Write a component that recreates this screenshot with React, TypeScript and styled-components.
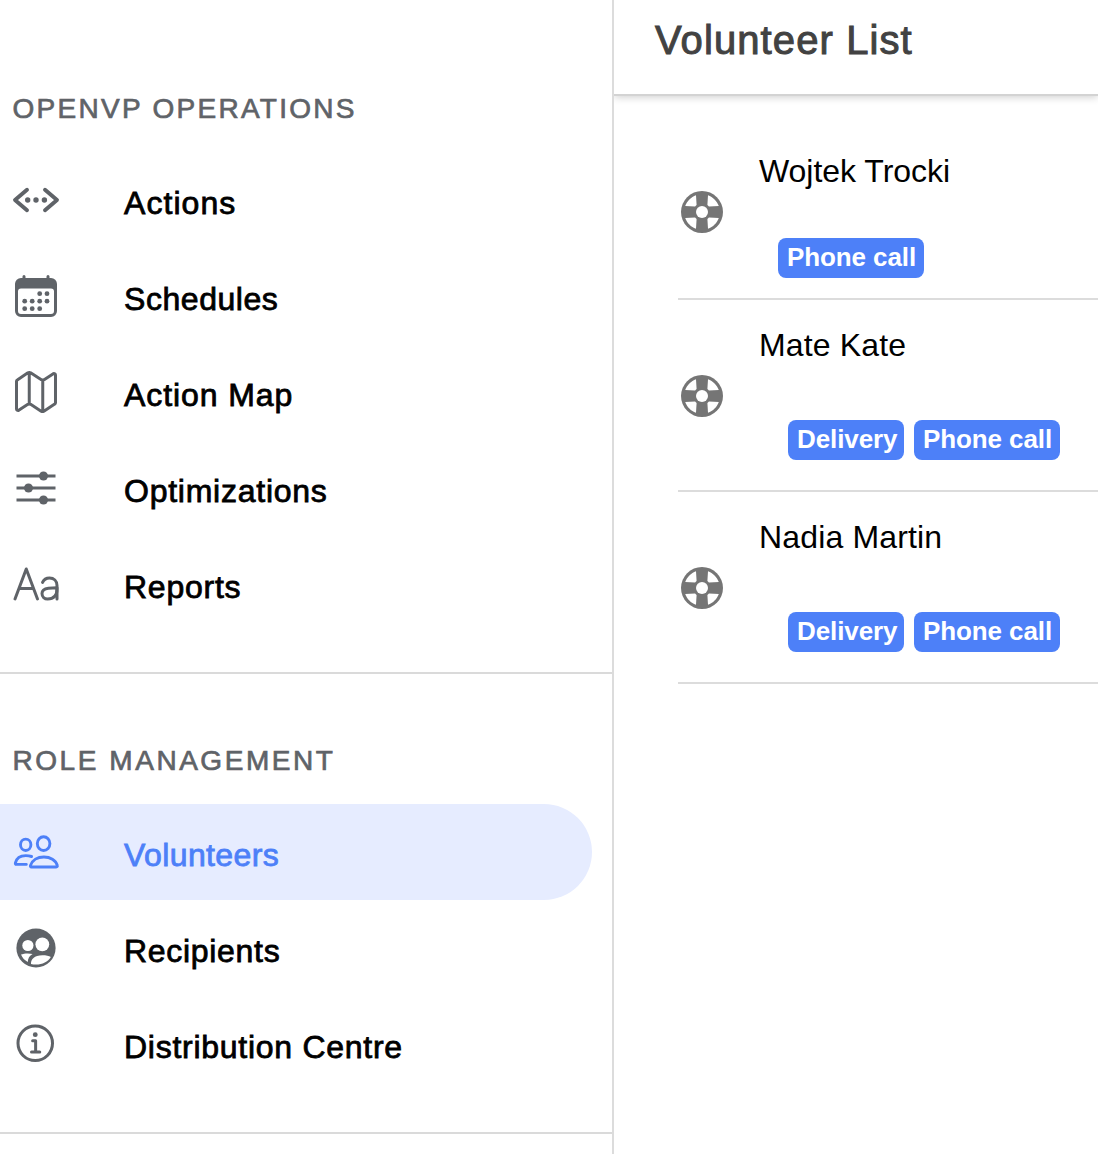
import React from "react";
import styled, { createGlobalStyle } from "styled-components";
import {
  IoInformationCircleOutline,
  IoMapOutline,
  IoTextOutline,
} from "react-icons/io5";

const GlobalStyle = createGlobalStyle`
  * { box-sizing: border-box; }
  body {
    margin: 0;
    background: #fff;
    color: #000;
    font-family: "Liberation Sans", Arial, sans-serif;
  }
`;

const Page = styled.div`
  display: flex;
  height: 1154px;
  overflow: hidden;
`;

const Sidebar = styled.nav`
  flex: 0 0 614px;
  border-right: 2px solid #dcdcdc;
`;

const Section = styled.section<{ $top: number; $bottom: number }>`
  padding: ${(p) => p.$top}px 20px ${(p) => p.$bottom}px 0;
  border-bottom: 2px solid #dadada;
`;

const SectionTitle = styled.h2<{ $tracking: number }>`
  margin: 0 0 27px;
  padding-left: 12.5px;
  font-size: 28px;
  line-height: 32px;
  font-weight: 400;
  letter-spacing: ${(p) => p.$tracking}px;
  color: #5f6368;
  -webkit-text-stroke: 0.7px currentColor;
  white-space: nowrap;
`;

const MenuItem = styled.a<{ $active?: boolean }>`
  display: flex;
  align-items: center;
  gap: 64px;
  height: 96px;
  padding-left: 12px;
  border-radius: 0 48px 48px 0;
  background: ${(p) => (p.$active ? "#e6ecff" : "transparent")};
  color: ${(p) => (p.$active ? "#4d80f8" : "#000")};

  svg {
    flex: none;
    width: 48px;
    height: 48px;
    color: ${(p) => (p.$active ? "#4d80f8" : "#5f6368")};
  }
`;

const MenuLabel = styled.span<{ $tracking: number }>`
  padding-top: 6px;
  font-size: 32px;
  line-height: 38px;
  letter-spacing: ${(p) => p.$tracking}px;
  -webkit-text-stroke: 0.8px currentColor;
  white-space: nowrap;
`;

const Main = styled.main`
  flex: 1;
  min-width: 0;
  overflow: hidden;
`;

const Header = styled.header`
  height: 94px;
  padding: 17px 0 0 41px;
  box-shadow: 0 2px 0 #d3d3d3, 0 3px 8px rgba(0, 0, 0, 0.2);
`;

const Title = styled.h1`
  margin: 0;
  font-size: 40px;
  line-height: 46px;
  font-weight: 400;
  letter-spacing: 1.1px;
  color: #424242;
  -webkit-text-stroke: 1px currentColor;
`;

const List = styled.div`
  display: flex;
  flex-direction: column;
  padding: 32px 0 0 64px;
`;

const Row = styled.article<{ $height: number }>`
  display: flex;
  gap: 33px;
  height: ${(p) => p.$height}px;
  border-bottom: 2px solid #dcdcdc;
`;

const RowIcon = styled.div<{ $top: number }>`
  flex: none;
  padding-top: ${(p) => p.$top}px;
  color: #757575;

  svg {
    display: block;
    width: 48px;
    height: 48px;
  }
`;

const RowBody = styled.div`
  padding-top: 26px;
`;

const Name = styled.h3<{ $tracking: number }>`
  margin: 0;
  font-size: 32px;
  line-height: 38px;
  font-weight: 400;
  letter-spacing: ${(p) => p.$tracking}px;
`;

const Badges = styled.div<{ $indent: number; $top: number }>`
  display: flex;
  gap: 10px;
  padding: ${(p) => p.$top}px 0 0 ${(p) => p.$indent}px;
`;

const Badge = styled.span<{ $width: number }>`
  width: ${(p) => p.$width}px;
  height: 40px;
  padding-left: 9px;
  border-radius: 8px;
  background: #4d80f8;
  color: #fff;
  font-size: 26px;
  line-height: 38px;
  font-weight: 700;
  letter-spacing: -0.1px;
  white-space: nowrap;
`;

const CodeIcon = () => (
  <svg viewBox="0 0 48 48" fill="currentColor">
    <path
      d="M15 13.7L3 24L15 34.3M33 13.7L45 24L33 34.3"
      fill="none"
      stroke="currentColor"
      strokeWidth="3.9"
      strokeLinecap="round"
      strokeLinejoin="round"
    />
    <circle cx="15.7" cy="24" r="2.7" />
    <circle cx="24" cy="24" r="2.7" />
    <circle cx="32.4" cy="24" r="2.7" />
  </svg>
);

const CALENDAR_DOTS = [
  [27.7, 21.7], [35, 21.7],
  [12.7, 29.2], [20.2, 29.2], [27.7, 29.2], [35, 29.2],
  [12.7, 36.7], [20.2, 36.7], [27.7, 36.7],
];

const CalendarIcon = () => (
  <svg viewBox="0 0 48 48" fill="currentColor">
    <path
      fillRule="evenodd"
      d="M10.5 6V4.5a1.5 1.5 0 0 1 3 0V6H34.5V4.5a1.5 1.5 0 0 1 3 0V6H39a6 6 0 0 1 6 6V39a6 6 0 0 1-6 6H9a6 6 0 0 1-6-6V12a6 6 0 0 1 6-6ZM9 16.5a3 3 0 0 0-3 3V39a3 3 0 0 0 3 3H39a3 3 0 0 0 3-3V19.5a3 3 0 0 0-3-3Z"
    />
    {CALENDAR_DOTS.map(([x, y]) => (
      <circle key={`${x}-${y}`} cx={x} cy={y} r="2.4" />
    ))}
  </svg>
);

const OptionsIcon = () => (
  <svg viewBox="0 0 48 48" fill="currentColor">
    <path d="M4.5 12H43.5M4.5 24H43.5M4.5 36H43.5" stroke="currentColor" strokeWidth="3" />
    <circle cx="31.5" cy="12" r="4.5" />
    <circle cx="16.5" cy="24" r="4.5" />
    <circle cx="31.5" cy="36" r="4.5" />
  </svg>
);

const PeopleIcon = () => (
  <svg viewBox="0 0 48 48" fill="none" stroke="currentColor" strokeWidth="2.9" strokeLinecap="round" strokeLinejoin="round">
    <ellipse cx="13.7" cy="16.8" rx="5.2" ry="5.7" />
    <ellipse cx="31.6" cy="15.6" rx="6.3" ry="6.9" />
    <path d="M19.4 39H44.2C45.2 39 45.6 38.3 45.3 37.4C43.8 32.2 38.3 29 31.9 29C25.5 29 20.2 32.2 18.5 37.4C18.2 38.3 18.6 39 19.4 39Z" />
    <path d="M19.6 28.5C17.8 27.9 15.8 27.6 13.7 27.6C8.7 27.6 4.6 30 3.4 34.8C3.2 35.7 3.5 36.4 4.4 36.4H14.3" />
  </svg>
);

const PeopleCircleIcon = () => (
  <svg viewBox="0 0 48 48">
    <circle cx="24" cy="24" r="19.6" fill="currentColor" />
    <g fill="#fff">
      <circle cx="15.9" cy="21.5" r="5.6" />
      <circle cx="30.3" cy="20.3" r="6.9" />
      <path d="M19 40C18.6 35.4 22.2 31.3 30.5 31.3C34 31.3 37 31.8 38.8 33C36 37.6 30.4 40.6 24 40.6C22 40.6 20.4 40.5 19 40Z" />
      <path d="M9 30.6C12 29.2 17.3 29 20.6 30.1C17.4 31.9 15.9 34.6 15.8 38C12.8 36.4 10.2 34 9 30.6Z" />
    </g>
  </svg>
);

const BuoyIcon = () => (
  <svg viewBox="0 0 48 48">
    <circle cx="24" cy="24" r="21" fill="currentColor" />
    <g fill="#fff">
      <circle cx="24" cy="24" r="6" />
      {[0, 90, 180, 270].map((angle) => (
        <path
          key={angle}
          transform={`rotate(${angle} 24 24)`}
          d="M30 7.2C35 9 39 13 40.8 18L30.9 18.6C30.4 18 30 17.6 29.4 17.1Z"
        />
      ))}
    </g>
  </svg>
);

const operations = [
  { label: "Actions", tracking: 1.05, icon: <CodeIcon /> },
  { label: "Schedules", tracking: 0.55, icon: <CalendarIcon /> },
  { label: "Action Map", tracking: 0.9, icon: <IoMapOutline /> },
  { label: "Optimizations", tracking: 0.75, icon: <OptionsIcon /> },
  { label: "Reports", tracking: 0.75, icon: <IoTextOutline /> },
];

const roles = [
  { label: "Volunteers", tracking: 0.4, icon: <PeopleIcon />, active: true },
  { label: "Recipients", tracking: 0.7, icon: <PeopleCircleIcon /> },
  { label: "Distribution Centre", tracking: 0.73, icon: <IoInformationCircleOutline /> },
];

const BADGE_WIDTHS: Record<string, number> = { Delivery: 116, "Phone call": 146 };

const volunteers = [
  { name: "Wojtek Trocki", tracking: -0.03, height: 174, iconTop: 62, badgeTop: 48, indent: 19, tags: ["Phone call"] },
  { name: "Mate Kate", tracking: 0.15, height: 192, iconTop: 72, badgeTop: 56, indent: 29, tags: ["Delivery", "Phone call"] },
  { name: "Nadia Martin", tracking: 0.15, height: 192, iconTop: 72, badgeTop: 56, indent: 29, tags: ["Delivery", "Phone call"] },
];

export default function App() {
  return (
    <Page>
      <GlobalStyle />
      <Sidebar>
        <Section $top={93} $bottom={40}>
          <SectionTitle $tracking={2.28}>OPENVP OPERATIONS</SectionTitle>
          {operations.map((item) => (
            <MenuItem key={item.label}>
              {item.icon}
              <MenuLabel $tracking={item.tracking}>{item.label}</MenuLabel>
            </MenuItem>
          ))}
        </Section>
        <Section $top={71} $bottom={40}>
          <SectionTitle $tracking={2.55}>ROLE MANAGEMENT</SectionTitle>
          {roles.map((item) => (
            <MenuItem key={item.label} $active={item.active}>
              {item.icon}
              <MenuLabel $tracking={item.tracking}>{item.label}</MenuLabel>
            </MenuItem>
          ))}
        </Section>
      </Sidebar>
      <Main>
        <Header>
          <Title>Volunteer List</Title>
        </Header>
        <List>
          {volunteers.map((v) => (
            <Row key={v.name} $height={v.height}>
              <RowIcon $top={v.iconTop}>
                <BuoyIcon />
              </RowIcon>
              <RowBody>
                <Name $tracking={v.tracking}>{v.name}</Name>
                <Badges $indent={v.indent} $top={v.badgeTop}>
                  {v.tags.map((tag) => (
                    <Badge key={tag} $width={BADGE_WIDTHS[tag]}>
                      {tag}
                    </Badge>
                  ))}
                </Badges>
              </RowBody>
            </Row>
          ))}
        </List>
      </Main>
    </Page>
  );
}
